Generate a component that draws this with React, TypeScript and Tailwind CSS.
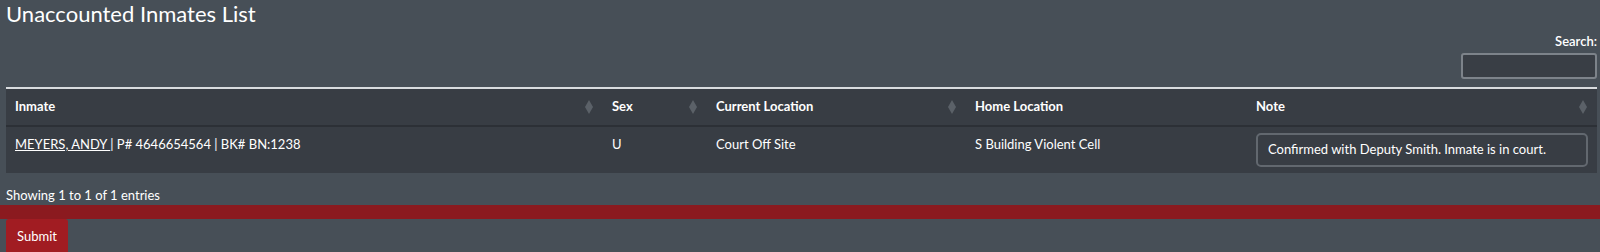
import { ReactNode } from 'react';

const font = { fontFamily: 'Lato, "Open Sans", "Liberation Sans", sans-serif' };

function SortIcon() {
  return (
    <svg width="8" height="14" viewBox="0 0 8 14" className="absolute right-[10px] top-1/2 -translate-y-1/2">
      <polygon points="4,0 8,7 4,14 0,7" fill="#5b6168" />
    </svg>
  );
}

function Th({ children, w, sort = true }: { children: ReactNode; w: string; sort?: boolean }) {
  return (
    <th className={`relative h-[38px] ${w} pl-[9px] text-left text-[13px] font-bold text-white`}>
      {children}
      {sort && <SortIcon />}
    </th>
  );
}

export default function App() {
  return (
    <div className="h-[252px] w-[1600px] overflow-hidden bg-[#474f57] text-[#eef0f2]" style={font}>
      <h1 className="pl-[6px] text-[22px] leading-[27px] text-white">Unaccounted Inmates List</h1>
      <div className="flex flex-col items-end pr-[3px] pt-[6px]">
        <label className="text-[13px] font-semibold leading-[16px] text-white">Search:</label>
        <input className="mt-[4px] h-[26px] w-[136px] rounded-[3px] border-2 border-[#7d838a] bg-[#393e45] outline-none" />
      </div>
      <div className="pl-[6px] pr-[3px] pt-[8px]">
        <table className="w-full table-fixed border-collapse bg-[#383d44]">
          <thead>
            <tr className="border-t-2 border-[#d9dcdf] border-b-2 border-b-[#2c3036]">
              <Th w="w-[597px]">Inmate</Th>
              <Th w="w-[104px]">Sex</Th>
              <Th w="w-[259px]">Current Location</Th>
              <Th w="w-[281px]" sort={false}>Home Location</Th>
              <Th w="w-auto">Note</Th>
            </tr>
          </thead>
          <tbody>
            <tr className="h-[47px] align-top text-[13px] text-white">
              <td className="pl-[9px] pt-[8px]">
                <a href="#" className="underline">MEYERS, ANDY </a>| P# 4646654564 | BK# BN:1238
              </td>
              <td className="pl-[9px] pt-[8px]">U</td>
              <td className="pl-[9px] pt-[8px]">Court Off Site</td>
              <td className="pl-[9px] pt-[8px]">S Building Violent Cell</td>
              <td className="pl-[9px] pr-[9px] pt-[6px]">
                <div className="flex h-[34px] items-center rounded-[5px] border-2 border-[#62686f] px-[10px]">
                  Confirmed with Deputy Smith. Inmate is in court.
                </div>
              </td>
            </tr>
          </tbody>
        </table>
      </div>
      <p className="pl-[6px] pt-[13px] text-[13px] leading-[18px] text-white">Showing 1 to 1 of 1 entries</p>
      <div className="mt-[1px] h-[14px] w-full bg-[#8b1a1f]" />
      <button className="ml-[6px] h-[36px] rounded-[3px] bg-[#a11c22] px-[11px] text-[13px] text-white">Submit</button>
    </div>
  );
}
